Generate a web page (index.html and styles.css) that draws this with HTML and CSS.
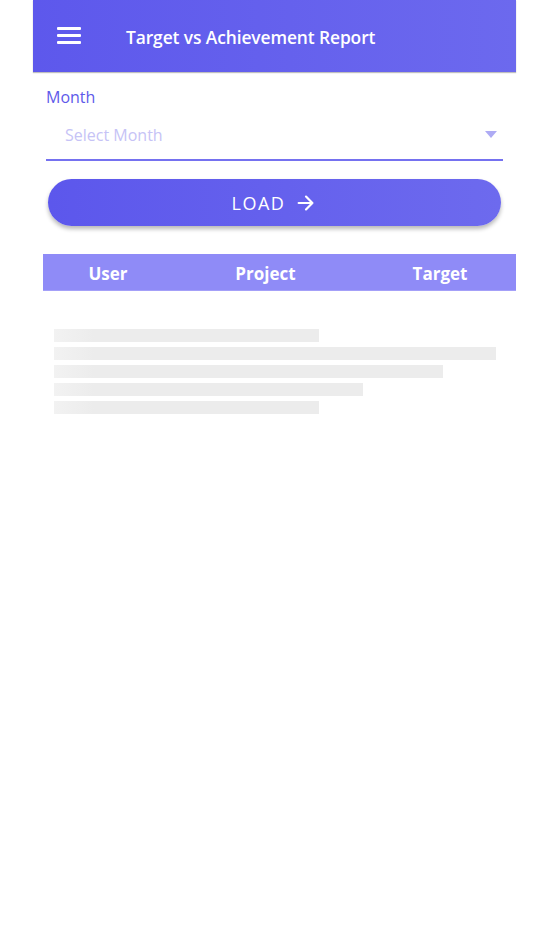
FILE: index.html
```html
<!DOCTYPE html>
<html>
<head>
<meta charset="utf-8">
<link rel="stylesheet" href="styles.css">
</head>
<body>
<div class="app">
  <header class="topbar">
    <span class="menu"><i></i><i></i><i></i></span>
    <h1 class="title">Target vs Achievement Report</h1>
  </header>
  <section class="form">
    <label class="label">Month</label>
    <div class="select">
      <span class="placeholder">Select Month</span>
      <span class="caret"></span>
    </div>
    <button class="load">LOAD
      <svg class="arrow" viewBox="0 0 24 24" width="22" height="22"><path d="M4 12h15M12 5l7 7-7 7" fill="none" stroke="#fff" stroke-width="2.4" stroke-linecap="round" stroke-linejoin="round"/></svg>
    </button>
  </section>
  <div class="thead">
    <span class="c1">User</span>
    <span class="c2">Project</span>
    <span class="c3">Target</span>
  </div>
  <div class="skeleton">
    <div class="bar w60"></div>
    <div class="bar w100"></div>
    <div class="bar w88"></div>
    <div class="bar w70"></div>
    <div class="bar w60"></div>
  </div>
</div>
</body>
</html>
```
FILE: styles.css
```css
html, body { margin: 0; padding: 0; background: #fff; }
body { font-family: "Open Sans", "Noto Sans", sans-serif; }
.app { margin-left: 33px; width: 483px; }
.topbar {
  height: 72px;
  display: flex;
  align-items: center;
  background: linear-gradient(90deg, #5d58ec 0%, #6c69ee 100%);
  box-shadow: 0 1px 1px rgba(0,0,0,0.25);
}
.menu { display: flex; flex-direction: column; gap: 4px; margin-left: 24px; width: 24px; margin-top: -1px; }
.menu i { display: block; height: 3px; background: #fff; border-radius: 1px; }
.title { margin: 2px 0 0 45px; font-size: 17.4px; font-weight: 600; color: #fff; letter-spacing: -0.1px; }
.form { padding: 14px 13px 0 13px; }
.label { display: block; font-size: 16px; color: #5e5aea; line-height: 22px; }
.select {
  display: flex; align-items: center; justify-content: space-between;
  height: 48px; margin-top: 3px;
  border-bottom: 2px solid #7571f0;
  padding: 0 6px 0 19px;
}
.placeholder { font-size: 16px; color: #c6c3f6; }
.caret { width: 0; height: 0; border-left: 6.5px solid transparent; border-right: 6.5px solid transparent; border-top: 7px solid #aeabf4; margin-top: -2px; }
.load {
  display: flex; align-items: center; justify-content: center; gap: 10px;
  width: 453px; height: 47px; margin: 18px 0 0 2px;
  border: none; border-radius: 24px;
  background: linear-gradient(90deg, #5c57ec 0%, #6d6aee 100%);
  color: #fff; font-family: "Open Sans", sans-serif; font-size: 18px; font-weight: 400; letter-spacing: 1.5px;
  box-shadow: 0 3px 4px rgba(0,0,0,0.28);
}
.arrow { display: block; }
.thead {
  display: grid; grid-template-columns: 130px 183px 1fr;
  margin: 28px 0 0 10px; height: 37px; align-items: center;
  background: #8f8bf7; color: #fff; font-weight: 700; font-size: 17px;
  box-shadow: 0 -1px 0 #a4a0f8 inset;
}
.thead span { text-align: center; padding-top: 2px; }
.thead .c2 { padding-left: 2px; }
.thead .c3 { padding-left: 8px; }
.skeleton { padding: 38px 20px 0 21px; display: flex; flex-direction: column; gap: 5px; }
.bar { height: 13px; background: linear-gradient(90deg, #f2f2f2 0px, #ececec 40px, #ececec 100%); }
.w60 { width: 60%; }
.w100 { width: 100%; }
.w88 { width: 88%; }
.w70 { width: 70%; }
```
